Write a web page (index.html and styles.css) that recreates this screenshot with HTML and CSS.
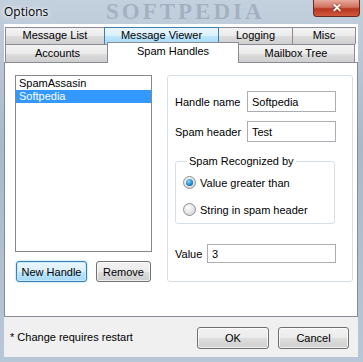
FILE: index.html
```html
<!DOCTYPE html>
<html lang="en">
<head>
  <meta charset="UTF-8" />
  <title>Options</title>
  <link rel="stylesheet" href="styles.css">
</head>
<body>

<div class="window">
  <div class="titlebar">
    <span class="title">Options</span>
    <span class="watermark">SOFTPEDIA</span>
    <button class="close">&#x2715;</button>
  </div>

  <div class="client">
    <div class="tabs">
      <div class="tab-row">
        <div class="tab w-list">Message List</div>
        <div class="tab hover w-viewer">Message Viewer</div>
        <div class="tab w-logging">Logging</div>
        <div class="tab w-misc">Misc</div>
      </div>
      <div class="tab-row">
        <div class="tab w-accounts">Accounts</div>
        <div class="tab active w-spam">Spam Handles</div>
        <div class="tab w-mailbox">Mailbox Tree</div>
      </div>
    </div>

    <div class="panel">
      <div class="left-col">
        <div class="listbox">
          <div class="item">SpamAssasin</div>
          <div class="item selected">Softpedia</div>
        </div>
        <div class="list-buttons">
          <button class="btn focused w-new">New Handle</button>
          <button class="btn w-remove">Remove</button>
        </div>
      </div>

      <div class="group">
        <div class="field-row">
          <label>Handle name</label>
          <input type="text" value="Softpedia">
        </div>
        <div class="field-row">
          <label>Spam header</label>
          <input type="text" value="Test">
        </div>

        <fieldset class="recognized">
          <legend>Spam Recognized by</legend>
          <div class="radio-row">
            <span class="radio checked"></span>
            <span>Value greater than</span>
          </div>
          <div class="radio-row">
            <span class="radio"></span>
            <span>String in spam header</span>
          </div>
        </fieldset>

        <div class="value-row">
          <label>Value</label>
          <input type="text" value="3">
        </div>
      </div>
    </div>

    <div class="footer">
      <span class="note">* Change requires restart</span>
      <div class="footer-buttons">
        <button class="btn w-ok">OK</button>
        <button class="btn w-cancel">Cancel</button>
      </div>
    </div>
  </div>
</div>

</body>
</html>
```

FILE: styles.css
```css
body {
  margin: 0;
  font-family: 'Liberation Sans', Arial, sans-serif;
  font-size: 11px;
  color: #000;
  background: #b4c3d3;
}
.window {
  width: 363px;
  height: 362px;
  overflow: hidden;
  background: linear-gradient(#c3d0de, #a9b9ca 40%, #b8c7d7);
}
.titlebar {
  height: 24px;
  display: flex;
  align-items: center;
  position: relative;
  overflow: hidden;
}
.title {
  font-family: 'Open Sans', 'Liberation Sans', sans-serif;
  font-size: 12px;
  margin-left: 4px;
  margin-top: -2px;
  text-shadow: 0 0 6px #fff, 0 0 3px #fff;
}
.watermark {
  position: absolute;
  left: 106px;
  top: 0;
  line-height: 24px;
  font-family: 'Liberation Serif', serif;
  font-weight: bold;
  font-size: 23px;
  letter-spacing: 3px;
  color: rgba(85, 100, 120, 0.28);
}
.close {
  position: absolute;
  right: 3px;
  top: 0;
  width: 47px;
  height: 17px;
  padding: 0;
  border: 1px solid #6b2a20;
  border-top: none;
  border-radius: 0 0 4px 4px;
  background: linear-gradient(#e9a99b, #d0725f 45%, #b7361f 55%, #cf5a3c);
  color: #fff;
  font-size: 12px;
  font-weight: bold;
  line-height: 15px;
  text-shadow: 0 0 2px #5a1a10;
}
.client {
  margin-left: 4px;
  width: 354px;
  background: #fff;
}
.tabs {
  padding: 3px 0 0 1px;
}
.tab-row {
  display: flex;
}
.tab {
  box-sizing: border-box;
  border: 1px solid #898c95;
  border-bottom: none;
  margin-right: -1px;
  background: linear-gradient(#f3f3f3, #ebebeb 50%, #dddddd 51%, #cfcfcf);
  text-align: center;
  height: 17px;
  line-height: 15px;
}
.tab-row + .tab-row .tab {
  height: 18px;
  line-height: 17px;
}
.tab.hover {
  border-color: #3c7fb1;
  background: linear-gradient(#eaf6fd, #d9f0fc 50%, #bee6fd 51%, #a7d9f5);
  position: relative;
  z-index: 1;
}
.tab-row + .tab-row .tab.active {
  background: #fff;
  height: 21px;
  margin: -2px -2px -1px -2px;
  line-height: 16px;
  position: relative;
  z-index: 2;
}
.w-list { width: 100px; }
.w-viewer { width: 115px; }
.w-logging { width: 75px; }
.w-misc { width: 64px; }
.w-accounts { width: 105px; }
.w-spam { width: 132px; }
.w-mailbox { width: 118px; }

.panel {
  box-sizing: border-box;
  height: 255px;
  border: 1px solid #898c95;
  padding: 12px 0 0 10px;
  display: flex;
}
.left-col {
  width: 137px;
}
.listbox {
  box-sizing: border-box;
  height: 177px;
  border: 1px solid #828790;
  padding-top: 1px;
}
.item {
  height: 13px;
  line-height: 13px;
  padding-left: 3px;
}
.item.selected {
  background: #3399ff;
  color: #fff;
}
.list-buttons {
  display: flex;
  gap: 9px;
  margin: 9px 0 0 1px;
}
.btn {
  box-sizing: border-box;
  height: 21px;
  padding: 0;
  border: 1px solid #707070;
  border-radius: 3px;
  background: linear-gradient(#f2f2f2, #ebebeb 50%, #dddddd 51%, #cfcfcf);
  font-family: 'Liberation Sans', Arial, sans-serif;
  font-size: 11px;
  color: #000;
  box-shadow: inset 0 0 0 1px rgba(255, 255, 255, 0.7);
}
.btn.focused {
  border-color: #3c7fb1;
  background: linear-gradient(#eaf6fd, #d9f0fc 50%, #bee6fd 51%, #a7d9f5);
  box-shadow: inset 0 0 0 1px #c6e9fc, 0 0 2px #6fc3f3;
}
.w-new { width: 71px; }
.w-remove { width: 55px; }
.w-ok { width: 72px; height: 22px; }
.w-cancel { width: 71px; height: 22px; }

.group {
  box-sizing: border-box;
  margin-left: 15px;
  width: 186px;
  height: 207px;
  border: 1px solid #d5dfe5;
  border-radius: 3px;
  padding: 15px 0 0 7px;
}
.field-row {
  display: flex;
  align-items: center;
  margin-bottom: 9px;
}
.field-row label {
  width: 72px;
}
input[type=text] {
  box-sizing: border-box;
  height: 21px;
  width: 89px;
  border: 1px solid #abadb3;
  padding: 0 4px;
  margin: 0;
  font-family: 'Liberation Sans', Arial, sans-serif;
  font-size: 11px;
  background: #fff;
}
.recognized {
  box-sizing: border-box;
  width: 160px;
  height: 69px;
  margin: 13px 0 0 0;
  padding: 8px 0 0 7px;
  border: 1px solid #d5dfe5;
  border-radius: 3px;
}
.recognized legend {
  padding: 0 2px;
  margin-left: 4px;
  line-height: 13px;
}
.radio-row {
  display: flex;
  align-items: center;
  gap: 4px;
  height: 13px;
  margin-bottom: 14px;
}
.radio {
  box-sizing: border-box;
  width: 13px;
  height: 13px;
  border-radius: 50%;
  border: 1px solid #8e8f8f;
  background: radial-gradient(circle at 40% 35%, #fdfdfd, #dcdcdc 70%, #c9c9c9);
  display: flex;
  align-items: center;
  justify-content: center;
}
.radio.checked::after {
  content: "";
  width: 7px;
  height: 7px;
  border-radius: 50%;
  background: radial-gradient(circle at 40% 35%, #8ad7ff, #1a82c7 60%, #0b4f8a);
}
.value-row {
  display: flex;
  align-items: center;
  margin-top: 20px;
}
.value-row label {
  width: 32px;
}
.value-row input[type=text] {
  width: 129px;
  height: 19px;
}

.footer {
  height: 40px;
  background: #f0f0f0;
  display: flex;
  align-items: center;
  justify-content: space-between;
  padding: 0 9px 0 6px;
}
.footer-buttons {
  display: flex;
  gap: 9px;
  margin-top: 2px;
}
```
